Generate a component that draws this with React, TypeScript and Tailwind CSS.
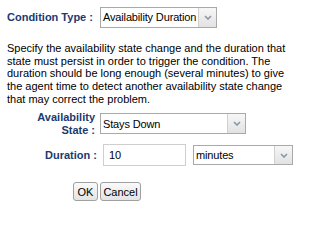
import React from "react";

const Chevron = () => (
  <svg width="8" height="5" viewBox="0 0 8 5" className="block">
    <path d="M1 1 L4 4 L7 1" fill="none" stroke="#8a97a3" strokeWidth="1.6" />
  </svg>
);

function FakeSelect({ value, className }: { value: string; className: string }) {
  return (
    <div className={`flex items-stretch border border-[#a9a9a9] bg-white ${className}`}>
      <div className="flex min-w-0 flex-1 items-center overflow-hidden whitespace-nowrap pl-[2px] text-[11px] tracking-[-0.15px] text-black">{value}</div>
      <div className="flex w-[18px] shrink-0 items-center justify-center border-l border-[#d0d0d0] bg-gradient-to-b from-[#f7f7f7] to-[#e2e2e2]">
        <Chevron />
      </div>
    </div>
  );
}

export default function App() {
  return (
    <div className="w-[298px] h-[211px] overflow-hidden bg-white font-['Liberation_Sans',Arial,sans-serif] text-[11px] leading-[1.15] text-black">
      <div className="flex items-center pt-[7px] pl-[7px]">
        <span className="w-[93px] font-bold text-[#1b3a6e]">Condition Type :</span>
        <FakeSelect value="Availability Duration" className="w-[117px] h-[21px]" />
      </div>
      <p className="mt-[14px] pl-[7px] pr-[10px]">
        Specify the availability state change and the duration that state must persist in order to trigger the condition. The duration should be long enough (several minutes) to give the agent time to detect another availability state change that may correct the problem.
      </p>
      <div className="mt-[6px] flex items-center">
        <span className="w-[95px] text-right font-bold text-[#1b3a6e]">
          Availability
          <br />
          State :
        </span>
        <FakeSelect value="Stays Down" className="ml-[5px] w-[146px] h-[21px]" />
      </div>
      <div className="mt-[8px] flex items-center">
        <span className="w-[97px] text-right font-bold text-[#1b3a6e]">Duration :</span>
        <div className="ml-[6px] flex h-[22px] w-[83px] items-center border border-[#cfcfcf] bg-white pl-[5px] text-[11px]">10</div>
        <FakeSelect value="minutes" className="ml-[7px] w-[100px] h-[20px]" />
      </div>
      <div className="mt-[16px] flex gap-[2px] pl-[73px]">
        <button className="h-[19px] w-[25px] rounded-[3px] border border-[#a0a0a0] bg-gradient-to-b from-[#fafafa] to-[#e4e4e4] text-[11px] text-black">OK</button>
        <button className="h-[19px] w-[41px] rounded-[3px] border border-[#a0a0a0] bg-gradient-to-b from-[#fafafa] to-[#e4e4e4] text-[11px] text-black">Cancel</button>
      </div>
    </div>
  );
}
